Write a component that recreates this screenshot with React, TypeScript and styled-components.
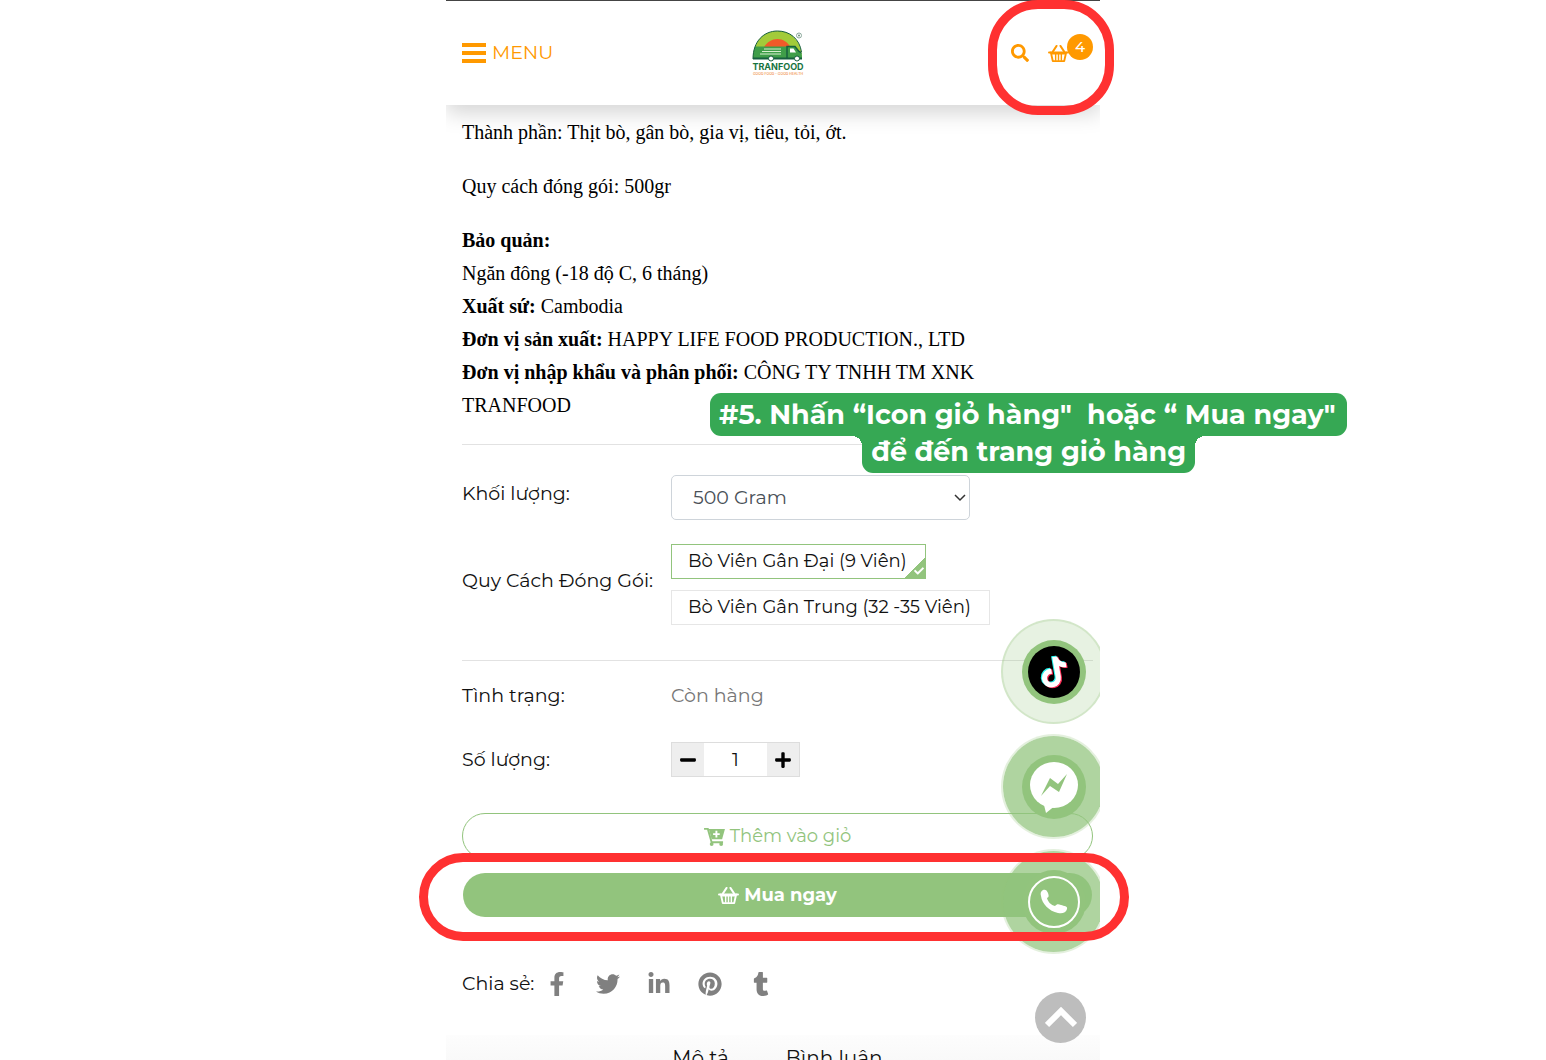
import React, { useState } from "react";
import styled, { createGlobalStyle, css } from "styled-components";
import {
  FaSearch,
  FaFacebookF,
  FaTwitter,
  FaLinkedinIn,
  FaPinterest,
  FaTumblr,
  FaMinus,
  FaPlus,
  FaCheck,
  FaTiktok,
} from "react-icons/fa";

const green = "#92c47d";
const orange = "#ff9900";
const red = "#ff3131";
const calloutGreen = "#36a854";
const sans = `Montserrat, Inter, "Noto Sans", sans-serif`;
const serif = `"Liberation Serif", "Times New Roman", serif`;

const GlobalStyle = createGlobalStyle`
  *, *::before, *::after { box-sizing: border-box; }
  body { margin: 0; background: #fff; color: #111; font: 400 19px/24px ${sans}; }
  button, input, select { font: inherit; color: inherit; margin: 0; }
  a { color: inherit; text-decoration: none; }
  svg { display: block; }
`;

const Page = styled.div`
  height: 100vh;
  overflow: hidden;
  display: flex;
  justify-content: center;
`;

const Phone = styled.div`
  position: relative;
  width: 100%;
  max-width: 654px;
`;

const Screen = styled.div`
  position: relative;
  height: 100%;
  overflow: hidden;
`;

const Header = styled.header`
  position: relative;
  display: grid;
  grid-template-columns: 1fr auto 1fr;
  align-items: center;
  height: 105px;
  padding: 0 7px 0 16px;
  border-top: 1px solid #444;
  background: #fff;
  color: ${orange};
  box-shadow: 0 8px 20px rgba(0, 0, 0, 0.17);
`;

const MenuButton = styled.button`
  display: flex;
  align-items: center;
  gap: 6px;
  justify-self: start;
  padding: 0;
  border: 0;
  background: none;
  color: ${orange};
`;

const Tools = styled.div`
  display: flex;
  align-items: center;
  justify-self: end;
  gap: 19px;
`;

const ToolLink = styled.a`
  position: relative;
  display: flex;
`;

const CartLink = styled(ToolLink)`
  padding-right: 24px;
`;

const Badge = styled.span`
  position: absolute;
  right: 0;
  bottom: 3px;
  width: 26px;
  height: 26px;
  border-radius: 50%;
  background: ${orange};
  color: #fff;
  font-size: 15px;
  font-weight: 500;
  line-height: 26px;
  text-align: center;
`;

const Content = styled.main`
  padding: 11px 7px 0 16px;
`;

const Description = styled.section`
  color: #000;
  font: 400 20px/33px ${serif};
  p { margin: 0 0 21px; }
  p:last-child { margin: 0; }
`;

const Divider = styled.hr<{ $before: number; $after: number }>`
  height: 1px;
  margin: ${(p) => p.$before}px 0 ${(p) => p.$after}px;
  border: 0;
  background: #e2e2e2;
`;

const Field = styled.div<{ $gap?: number; $lift?: boolean }>`
  display: grid;
  grid-template-columns: 209px 1fr;
  align-items: center;
  margin-top: ${(p) => p.$gap ?? 0}px;
  ${(p) => p.$lift && css`
    & > :first-child { padding-bottom: 7px; }
  `}
`;

const SelectBox = styled.div`
  position: relative;
  width: 299px;
  svg {
    position: absolute;
    right: 4px;
    top: 17px;
    pointer-events: none;
  }
`;

const Select = styled.select`
  appearance: none;
  width: 100%;
  height: 45px;
  padding: 0 21px;
  border: 1px solid #ced4da;
  border-radius: 5px;
  background: #fff;
  color: #495057;
`;

const Options = styled.div`
  display: flex;
  flex-direction: column;
  align-items: flex-start;
  gap: 11px;
  font-size: 18px;
`;

const Option = styled.label<{ $on: boolean }>`
  position: relative;
  height: 35px;
  padding: 0 18px 0 16px;
  border: 1px solid ${(p) => (p.$on ? green : "#e6e6e6")};
  line-height: 33px;
  white-space: nowrap;
  cursor: pointer;
  input { position: absolute; opacity: 0; }
`;

const Corner = styled.span`
  position: absolute;
  right: 0;
  bottom: 0;
  width: 20px;
  height: 20px;
  background: linear-gradient(135deg, transparent 50%, ${green} 50%);
  color: #fff;
  svg { position: absolute; right: 1px; bottom: 2px; }
`;

const Status = styled.span`
  color: #777;
`;

const Stepper = styled.div`
  display: grid;
  grid-template-columns: 32px 1fr 32px;
  width: 129px;
  height: 35px;
  border: 1px solid #ddd;
`;

const StepButton = styled.button`
  display: grid;
  place-items: center;
  padding: 0;
  border: 0;
  background: #eee;
  color: #000;
`;

const StepInput = styled.input`
  width: 100%;
  padding: 0;
  border: 0;
  text-align: center;
`;

const Actions = styled.div`
  display: grid;
  gap: 14px;
  margin-top: 36px;
`;

const ActionButton = styled.button<{ $solid?: boolean }>`
  display: flex;
  align-items: center;
  justify-content: center;
  gap: 5px;
  height: ${(p) => (p.$solid ? 44 : 46)}px;
  margin: ${(p) => (p.$solid ? "0 1px" : "0")};
  border: ${(p) => (p.$solid ? "0" : `1px solid ${green}`)};
  border-radius: 23px;
  background: ${(p) => (p.$solid ? green : "#fff")};
  color: ${(p) => (p.$solid ? "#fff" : green)};
  font-size: 18px;
  font-weight: ${(p) => (p.$solid ? 700 : 400)};
`;

const Share = styled.div`
  display: flex;
  align-items: center;
  gap: 11px;
  margin-top: 55px;
`;

const ShareLinks = styled.div`
  display: flex;
  gap: 27px;
  color: #808080;
`;

const Tabs = styled.nav`
  display: flex;
  justify-content: center;
  gap: 57px;
  height: 60px;
  margin-top: 39px;
  padding: 11px 7px 0 16px;
  background: linear-gradient(#fdfdfd, #f4f4f4);
  font-size: 20px;
`;

const Floating = styled.div`
  position: absolute;
  top: 619px;
  right: -6px;
  display: grid;
  gap: 10px;
`;

const Bubble = styled.a<{ $faint?: boolean }>`
  display: grid;
  place-items: center;
  width: 105px;
  height: 105px;
  border: 2px solid rgba(146, 196, 125, 0.25);
  border-radius: 50%;
  background: rgba(146, 196, 125, ${(p) => (p.$faint ? 0.22 : 0.73)});
  background-clip: ${(p) => (p.$faint ? "border-box" : "padding-box")};
`;

const BubbleCore = styled.span`
  display: grid;
  place-items: center;
  width: 64px;
  height: 64px;
  border-radius: 50%;
  background: ${green};
`;

const PhoneRing = styled.span`
  display: grid;
  place-items: center;
  width: 52px;
  height: 52px;
  border: 2px solid #fff;
  border-radius: 50%;
  color: #fff;
`;

const TopButton = styled.button`
  position: absolute;
  top: 992px;
  right: 14px;
  display: grid;
  place-items: center;
  width: 51px;
  height: 51px;
  padding: 0;
  border: 0;
  border-radius: 50%;
  background: #bdbdbd;
`;

const Ring = styled.div`
  position: absolute;
  border: 9px solid ${red};
  pointer-events: none;
`;

const CartRing = styled(Ring)`
  top: 0;
  right: -14px;
  width: 126px;
  height: 115px;
  border-radius: 50px;
`;

const BuyRing = styled(Ring)`
  top: 853px;
  left: -27px;
  right: -29px;
  height: 88px;
  border-radius: 44px;
`;

const Callout = styled.div`
  position: absolute;
  top: 393px;
  left: 264px;
  display: flex;
  flex-direction: column;
  align-items: center;
  color: #fff;
  font-weight: 700;
  font-size: 27px;
  white-space: pre;
`;

const CalloutTop = styled.span`
  height: 43px;
  padding: 0 12px 0 9px;
  border-radius: 11px;
  background: ${calloutGreen};
  line-height: 43px;
`;

const CalloutBottom = styled.span`
  position: relative;
  height: 37px;
  padding: 0 9px;
  border-radius: 0 0 11px 11px;
  background: ${calloutGreen};
  line-height: 32px;
  &::before,
  &::after {
    content: "";
    position: absolute;
    top: 0;
    width: 10px;
    height: 10px;
  }
  &::before {
    right: 100%;
    background: radial-gradient(circle at 0 100%, transparent 10px, ${calloutGreen} 10px);
  }
  &::after {
    left: 100%;
    background: radial-gradient(circle at 100% 100%, transparent 10px, ${calloutGreen} 10px);
  }
`;

const Logo = () => (
  <svg width="52" height="46" viewBox="0 0 104 92" role="img" aria-label="Tranfood">
    <clipPath id="dome">
      <path d="M2 58C2 22 24 2 51 2S100 22 100 58z" />
    </clipPath>
    <g clipPath="url(#dome)">
      <path d="M0 0h104v58H0z" fill="#a2cb3a" />
      <path d="M24 34c6-10 16-16 27-16s20 6 26 16z" fill="#f15a29" />
      <path d="M0 33h70v25H0z" fill="#3f9e49" />
      <path d="M70 33h16l8 10 8 4v11H70z" fill="#3f9e49" stroke="#17603f" strokeWidth="3" />
    </g>
    <path d="M2 58C2 22 24 2 51 2c24 0 44 15 48 42" fill="none" stroke="#17603f" strokeWidth="2" />
    <path d="M76 37h7l5 8H76z" fill="#fff" />
    <path d="M24 38h34M20 43h38M16 48h42" stroke="#d8efd0" strokeWidth="2" />
    <path d="M2 57h98" stroke="#17603f" strokeWidth="4" />
    <circle cx="38" cy="57" r="5" fill="#fff" stroke="#17603f" strokeWidth="2" />
    <circle cx="90" cy="57" r="5" fill="#fff" stroke="#17603f" strokeWidth="2" />
    <circle cx="94" cy="11" r="5" fill="none" stroke="#8aa79a" strokeWidth="2" />
    <circle cx="94" cy="11" r="2" fill="#6d8c7d" />
    <text x="52" y="79" textAnchor="middle" fontFamily="Inter, sans-serif" fontSize="18" fontWeight="700" fill="#17733f">TRANFOOD</text>
    <text x="52" y="89" textAnchor="middle" fontFamily="Inter, sans-serif" fontSize="7" fontWeight="500" fill="#f08a3c">GOOD FOOD - GOOD HEALTH</text>
  </svg>
);

const BarsIcon = () => (
  <svg width="24" height="20" viewBox="0 0 24 20" fill="currentColor" aria-hidden="true">
    <path d="M0 0h24v4H0zM0 8h24v4H0zM0 16h24v4H0z" />
  </svg>
);

const BasketIcon = () => (
  <svg width="21" height="19" viewBox="0 0 22 20" fill="none" stroke="currentColor" strokeLinecap="round" strokeLinejoin="round" aria-hidden="true">
    <path d="M5 8l4-6M17 8l-4-6" strokeWidth="2" />
    <path d="M1 9h20" strokeWidth="2" />
    <path d="M3 9l2 9h12l2-9" strokeWidth="2" />
    <path d="M8 10v7M11 10v7M14 10v7" strokeWidth="1.500" />
    <path d="M4 10h14" strokeWidth="2" />
  </svg>
);

const CartPlusIcon = () => (
  <svg width="21" height="19" viewBox="0 0 22 20" fill="none" stroke="currentColor" aria-hidden="true">
    <path d="M0 2h4l4 14h12" strokeWidth="2" />
    <path d="M5 2h17l-3 11H8z" fill="currentColor" stroke="none" />
    <path d="M13 4v7M9.500 7.500h7" stroke="#fff" strokeWidth="2" />
    <circle cx="8" cy="18" r="2" fill="currentColor" stroke="none" />
    <circle cx="18" cy="18" r="2" fill="currentColor" stroke="none" />
  </svg>
);

const TiktokIcon = () => (
  <svg width="52" height="52" viewBox="0 0 52 52" aria-hidden="true">
    <circle cx="26" cy="26" r="26" fill="#000" />
    <g transform="rotate(-10 26 26)">
      <FaTiktok x="10" y="10" size={30} color="#25f4ee" />
      <FaTiktok x="12" y="12" size={30} color="#fe2c55" />
      <FaTiktok x="11" y="11" size={30} color="#fff" />
    </g>
  </svg>
);

const MessengerIcon = () => (
  <svg width="50" height="54" viewBox="0 0 50 54" aria-hidden="true">
    <ellipse cx="25" cy="25" rx="24" ry="23" fill="#fff" />
    <path d="M14 41l3 12 10-8z" fill="#fff" />
    <path d="M12 36l9-18 8 6 9-10-8 18-9-6z" fill={green} />
  </svg>
);

const HandsetIcon = () => (
  <svg width="28" height="25" viewBox="0 0 28 25" fill="currentColor" aria-hidden="true">
    <path d="M3 1c2-1 4 0 5 3s1 4-1 5c1 4 4 7 8 8 2-2 3-2 6-1s7 1 6 4c-1 4-5 5-9 4C9 22 2 15 1 7 0 4 1 2 3 1z" />
  </svg>
);

const packs = ["Bò Viên Gân Đại (9 Viên)", "Bò Viên Gân Trung (32 -35 Viên)"];

export default function App() {
  const [pack, setPack] = useState(0);
  const [count, setCount] = useState(1);

  return (
    <Page>
      <GlobalStyle />
      <Phone>
        <Screen>
          <Header>
            <MenuButton type="button">
              <BarsIcon />
              MENU
            </MenuButton>
            <Logo />
            <Tools>
              <ToolLink href="#search" aria-label="Tìm kiếm">
                <FaSearch size={18} />
              </ToolLink>
              <CartLink href="#cart">
                <BasketIcon />
                <Badge>4</Badge>
              </CartLink>
            </Tools>
          </Header>

          <Content>
            <Description>
              <p>Thành phần: Thịt bò, gân bò, gia vị, tiêu, tỏi, ớt.</p>
              <p>Quy cách đóng gói: 500gr</p>
              <p>
                <b>Bảo quản:</b>
                <br />
                Ngăn đông (-18 độ C, 6 tháng)
                <br />
                <b>Xuất sứ:</b> Cambodia
                <br />
                <b>Đơn vị sản xuất:</b> HAPPY LIFE FOOD PRODUCTION., LTD
                <br />
                <b>Đơn vị nhập khẩu và phân phối:</b> CÔNG TY TNHH TM XNK
                <br />
                TRANFOOD
              </p>
            </Description>

            <Divider $before={22} $after={30} />

            <Field $lift>
              <label htmlFor="weight">Khối lượng:</label>
              <SelectBox>
                <Select id="weight">
                  <option>500 Gram</option>
                </Select>
                <svg width="12" height="12" viewBox="0 0 12 12" fill="none" stroke="#333" strokeWidth="1.500">
                  <path d="M1 3l5 5 5-5" />
                </svg>
              </SelectBox>
            </Field>
            <Field $gap={24} $lift>
              <span id="pack-label">Quy Cách Đóng Gói:</span>
              <Options role="radiogroup" aria-labelledby="pack-label">
                {packs.map((name, i) => (
                  <Option key={name} $on={pack === i}>
                    <input type="radio" name="pack" checked={pack === i} onChange={() => setPack(i)} />
                    {name}
                    {pack === i && (
                      <Corner>
                        <FaCheck size={10} />
                      </Corner>
                    )}
                  </Option>
                ))}
              </Options>
            </Field>

            <Divider $before={35} $after={23} />

            <Field>
              <span>Tình trạng:</span>
              <Status>Còn hàng</Status>
            </Field>
            <Field $gap={34}>
              <label htmlFor="count">Số lượng:</label>
              <Stepper>
                <StepButton type="button" aria-label="Giảm" onClick={() => setCount(Math.max(1, count - 1))}>
                  <FaMinus size={18} />
                </StepButton>
                <StepInput id="count" value={count} onChange={(e) => setCount(Number(e.target.value) || 1)} />
                <StepButton type="button" aria-label="Tăng" onClick={() => setCount(count + 1)}>
                  <FaPlus size={18} />
                </StepButton>
              </Stepper>
            </Field>

            <Actions>
              <ActionButton type="button">
                <CartPlusIcon />
                Thêm vào giỏ
              </ActionButton>
              <ActionButton type="button" $solid>
                <BasketIcon />
                Mua ngay
              </ActionButton>
            </Actions>

            <Share>
              <span>Chia sẻ:</span>
              <ShareLinks>
                <a href="#facebook" aria-label="Facebook"><FaFacebookF size={24} /></a>
                <a href="#twitter" aria-label="Twitter"><FaTwitter size={24} /></a>
                <a href="#linkedin" aria-label="LinkedIn"><FaLinkedinIn size={24} /></a>
                <a href="#pinterest" aria-label="Pinterest"><FaPinterest size={24} /></a>
                <a href="#tumblr" aria-label="Tumblr"><FaTumblr size={24} /></a>
              </ShareLinks>
            </Share>
          </Content>

          <Tabs>
            <a href="#description">Mô tả</a>
            <a href="#comments">Bình luận</a>
          </Tabs>

          <Floating>
            <Bubble href="#tiktok" aria-label="TikTok" $faint>
              <BubbleCore><TiktokIcon /></BubbleCore>
            </Bubble>
            <Bubble href="#messenger" aria-label="Messenger">
              <BubbleCore><MessengerIcon /></BubbleCore>
            </Bubble>
            <Bubble href="#phone" aria-label="Điện thoại">
              <BubbleCore>
                <PhoneRing><HandsetIcon /></PhoneRing>
              </BubbleCore>
            </Bubble>
          </Floating>
          <TopButton type="button" aria-label="Lên đầu trang">
            <svg width="32" height="21" viewBox="0 0 32 21" fill="none" stroke="#fff" strokeWidth="6">
              <path d="M2 18L16 4l14 14" />
            </svg>
          </TopButton>
        </Screen>

        <CartRing />
        <BuyRing />
        <Callout>
          <CalloutTop>{'#5. Nhấn “Icon giỏ hàng"  hoặc “ Mua ngay"'}</CalloutTop>
          <CalloutBottom>để đến trang giỏ hàng</CalloutBottom>
        </Callout>
      </Phone>
    </Page>
  );
}
